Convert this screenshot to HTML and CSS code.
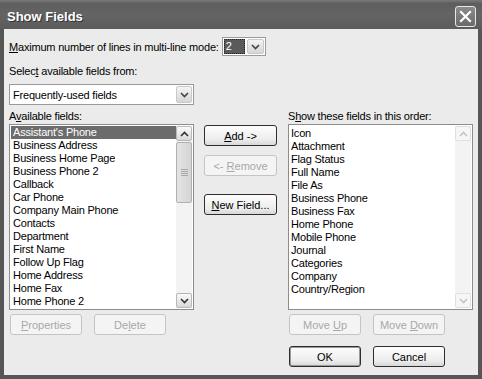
FILE: index.html
```html
<!DOCTYPE html>
<html>
<head>
<meta charset="utf-8">
<link rel="stylesheet" href="styles.css">
</head>
<body>
<div class="window">
  <div class="titlebar">
    <span class="title">Show Fields</span>
    <span class="close"><svg width="13" height="13" viewBox="0 0 13 13"><path d="M2 2 L11 11 M11 2 L2 11" stroke="#fff" stroke-width="2.2" stroke-linecap="square"/></svg></span>
  </div>
  <div class="client">
    <div class="row1">
      <span class="lbl"><u>M</u>aximum number of lines in multi-line mode:</span>
      <span class="combo small">
        <span class="sel">2</span>
        <span class="dd"><svg width="9" height="6" viewBox="0 0 9 6"><path d="M1 1 L4.5 4.5 L8 1" stroke="#444" stroke-width="1.6" fill="none"/></svg></span>
      </span>
    </div>
    <div class="lbl row2">Selec<u>t</u> available fields from:</div>
    <div class="combo wide">
      <span class="val">Frequently-used fields</span>
      <span class="dd"><svg width="9" height="6" viewBox="0 0 9 6"><path d="M1 1 L4.5 4.5 L8 1" stroke="#444" stroke-width="1.6" fill="none"/></svg></span>
    </div>
    <div class="grid">
      <div class="lbl gl">A<u>v</u>ailable fields:</div>
      <div class="lbl gr">S<u>h</u>ow these fields in this order:</div>
      <div class="list">
        <ul class="items">
          <li class="hl">Assistant's Phone</li>
          <li>Business Address</li>
          <li>Business Home Page</li>
          <li>Business Phone 2</li>
          <li>Callback</li>
          <li>Car Phone</li>
          <li>Company Main Phone</li>
          <li>Contacts</li>
          <li>Department</li>
          <li>First Name</li>
          <li>Follow Up Flag</li>
          <li>Home Address</li>
          <li>Home Fax</li>
          <li>Home Phone 2</li>
        </ul>
        <div class="sbar">
          <span class="sbtn"><svg width="9" height="6" viewBox="0 0 9 6"><path d="M1 5 L4.5 1.5 L8 5" stroke="#333" stroke-width="1.6" fill="none"/></svg></span>
          <span class="track"><span class="thumb"><span class="grip"></span></span></span>
          <span class="sbtn"><svg width="9" height="6" viewBox="0 0 9 6"><path d="M1 1 L4.5 4.5 L8 1" stroke="#333" stroke-width="1.6" fill="none"/></svg></span>
        </div>
      </div>
      <div class="mid">
        <button class="btn"><u>A</u>dd -&gt;</button>
        <button class="btn dis">&lt;- <u>R</u>emove</button>
        <button class="btn nf"><u>N</u>ew Field...</button>
      </div>
      <div class="list">
        <ul class="items r">
          <li>Icon</li>
          <li>Attachment</li>
          <li>Flag Status</li>
          <li>Full Name</li>
          <li>File As</li>
          <li>Business Phone</li>
          <li>Business Fax</li>
          <li>Home Phone</li>
          <li>Mobile Phone</li>
          <li>Journal</li>
          <li>Categories</li>
          <li>Company</li>
          <li>Country/Region</li>
        </ul>
        <div class="sbar off">
          <span class="sbtn"><svg width="9" height="6" viewBox="0 0 9 6"><path d="M1 5 L4.5 1.5 L8 5" stroke="#c4c4c4" stroke-width="1.6" fill="none"/></svg></span>
          <span class="track"></span>
          <span class="sbtn"><svg width="9" height="6" viewBox="0 0 9 6"><path d="M1 1 L4.5 4.5 L8 1" stroke="#c4c4c4" stroke-width="1.6" fill="none"/></svg></span>
        </div>
      </div>
      <div class="brow bl">
        <button class="btn dis"><u>P</u>roperties</button>
        <button class="btn dis">De<u>l</u>ete</button>
      </div>
      <div class="brow br">
        <button class="btn dis">Move <u>U</u>p</button>
        <button class="btn dis">Move <u>D</u>own</button>
      </div>
      <div class="brow ok">
        <button class="btn def">OK</button>
        <button class="btn">Cancel</button>
      </div>
    </div>
  </div>
</div>
</body>
</html>
```
FILE: styles.css
```css
* { box-sizing: border-box; }
body { margin: 0; background: #4a4a4a; font-family: "Liberation Sans", Arial, sans-serif; font-size: 11px; letter-spacing: -0.2px; color: #000; }
.window { width: 482px; height: 379px; background: #565656; display: flex; flex-direction: column; }
.titlebar {
  height: 29px; display: flex; align-items: center; justify-content: space-between;
  padding: 0 6px 0 7px;
  background: linear-gradient(#7a7a7a 0%, #5e5e5e 12%, #646464 50%, #5b5b5b 100%);
}
.title { color: #fff; font-weight: bold; font-size: 13px; letter-spacing: 0; text-shadow: 1px 1px 0 #333; padding-top: 3px; }
.close {
  width: 21px; height: 21px; border: 1px solid #e8e8e8; border-radius: 3px;
  background: linear-gradient(#8a8a8a, #6a6a6a);
  display: flex; align-items: center; justify-content: center; margin-top: 3px;
}
.client { flex: 1; margin: 0 4px 4px 4px; background: #ebebeb; padding: 8px 6px 0 5px; }
.row1 { display: flex; align-items: center; height: 19px; }
.row1 .lbl { margin-right: 3px; }
.combo { display: flex; align-items: center; background: #fff; border: 1px solid #9a9a9a; padding: 1px; }
.combo.small { width: 44px; height: 19px; }
.sel { width: 21px; height: 15px; background: #5a5a5a; color: #fff; padding-left: 2px; line-height: 15px; outline: 1px dotted #222; outline-offset: -1px; }
.dd {
  margin-left: auto; width: 17px; height: 15px; border-radius: 2px;
  background: linear-gradient(#f4f4f4, #d6d6d6); border: 1px solid #c8c8c8;
  display: flex; align-items: center; justify-content: center;
}
.row2 { margin-top: 9px; height: 13px; }
.combo.wide { width: 185px; height: 21px; margin-top: 6px; }
.combo.wide .val { padding-left: 2px; }
.combo.wide .dd { height: 17px; width: 16px; }
.grid { display: grid; grid-template-columns: 185px 74px 185px; column-gap: 10px; margin-top: 5px; }
.gl { grid-column: 1; height: 14px; }
.gr { grid-column: 3; height: 14px; }
.list { height: 186px; background: #fff; border: 1px solid #8c8c8c; display: flex; padding: 1px; }
.items { list-style: none; margin: 0; padding: 0; flex: 1; }
.items li { height: 13px; line-height: 13px; padding-left: 2px; white-space: nowrap; }
.items.r li { padding-left: 1px; }
.items.r { padding-top: 1px; }
.items li.hl { background: #6c6c6c; color: #fff; }
.sbar { width: 16px; display: flex; flex-direction: column; background: #f3f3f3; }
.sbtn {
  height: 15px; width: 16px; border: 1px solid #b8b8b8; border-radius: 2px;
  background: linear-gradient(#fafafa, #d8d8d8);
  display: flex; align-items: center; justify-content: center;
}
.track { flex: 1; padding: 1px 0; }
.thumb {
  display: flex; align-items: center; justify-content: center;
  height: 61px; width: 16px; border: 1px solid #b0b0b0; border-radius: 2px;
  background: linear-gradient(90deg, #e4e4e4, #d4d4d4);
}
.grip { width: 7px; height: 7px; background: repeating-linear-gradient(#aaa 0 1px, transparent 1px 2px); }
.sbar.off .sbtn { border-color: #e0e0e0; background: #f6f6f6; }
.mid { grid-column: 2; display: flex; flex-direction: column; padding-top: 1px; }
.btn {
  font: inherit; font-size: 11px; color: #000; height: 21px; width: 73px; padding: 0;
  border: 1px solid #2e2e2e; border-radius: 3px;
  background: linear-gradient(#fdfdfd, #ededed 70%, #d8d8d8);
}
.mid .btn { margin-bottom: 9px; }
.mid .btn.nf { margin-top: 9px; }
.btn.dis { color: #a8a8a8; border-color: #c4c4c4; background: #f4f4f4; }
.btn.def { box-shadow: inset 0 0 0 1px #9a9a9a; }
.brow { display: flex; gap: 12px; margin-top: 4px; padding-left: 1px; }
.brow .btn { width: 72px; }
.bl { grid-column: 1; }
.br { grid-column: 3; }
.ok { grid-column: 3; margin-top: 11px; }
```
